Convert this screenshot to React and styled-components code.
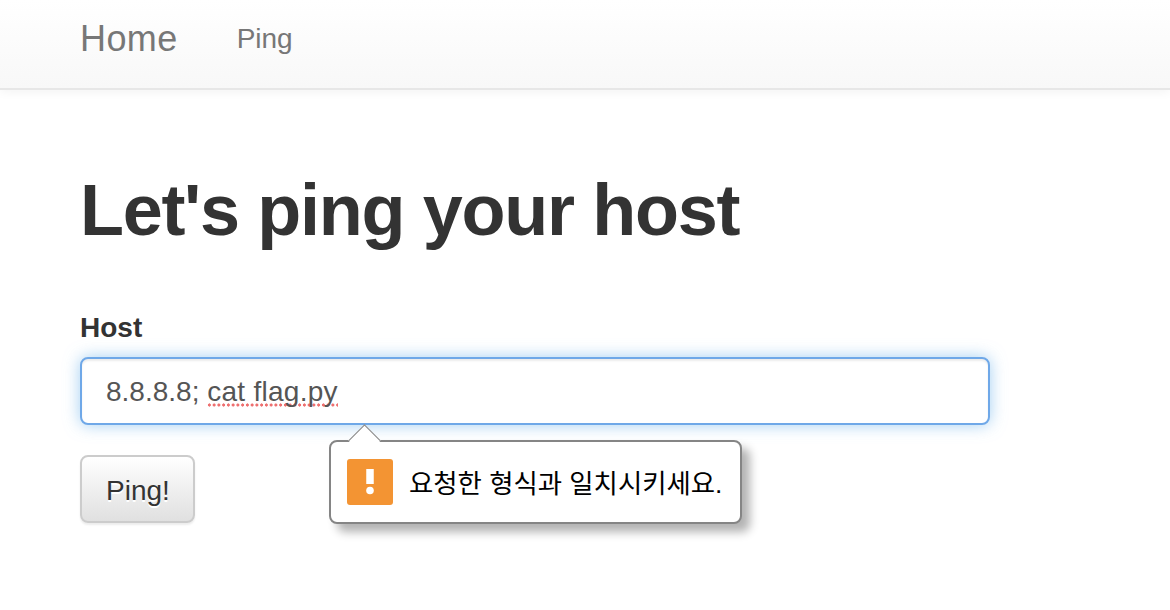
import React from 'react';
import styled, { createGlobalStyle } from 'styled-components';

const GlobalStyle = createGlobalStyle`
  html, body {
    margin: 0;
    height: 100%;
    background: #fff;
    overflow: hidden;
  }
  body {
    font-family: "Liberation Sans", Arial, sans-serif;
    color: #333;
  }
`;

const App = () => (
  <>
    <GlobalStyle />
    <Navbar>
      <Brand>Home</Brand>
      <NavLink>Ping</NavLink>
    </Navbar>
    <Container>
      <Title>Let's ping your host</Title>
      <Label>Host</Label>
      <FieldWrap>
        <HostInput>
          8.8.8.8; <Misspelled>cat flag.py</Misspelled>
        </HostInput>
        <Bubble>
          <BubbleArrow />
          <WarningIcon>
            <svg width="46" height="46" viewBox="0 0 46 46">
              <rect x="19.25" y="10" width="7.5" height="15" fill="#fff" />
              <circle cx="23" cy="31.5" r="3.8" fill="#fff" />
            </svg>
          </WarningIcon>
          <BubbleText>요청한 형식과 일치시키세요.</BubbleText>
        </Bubble>
      </FieldWrap>
      <PingButton>Ping!</PingButton>
    </Container>
  </>
);

const Navbar = styled.nav`
  display: flex;
  align-items: center;
  height: 78px;
  padding: 0 80px 10px;
  background: linear-gradient(to bottom, #fff 0%, #f8f8f8 100%);
  border-bottom: 2px solid #e7e7e7;
  box-shadow: 0 2px 10px rgba(0, 0, 0, 0.05);
`;

const Brand = styled.a`
  font-size: 36px;
  letter-spacing: 0.4px;
  color: #777;
  margin-right: 59px;
`;

const NavLink = styled.a`
  font-size: 28px;
  color: #777;
`;

const Container = styled.main`
  padding: 0 80px;
  width: 910px;
`;

const Title = styled.h1`
  margin: 80px 0 0;
  font-size: 72px;
  line-height: 80px;
  font-weight: 700;
  letter-spacing: -1.3px;
  color: #333;
`;

const Label = styled.label`
  display: block;
  margin: 58px 0 9px;
  font-size: 28px;
  line-height: 40px;
  font-weight: 700;
`;

const FieldWrap = styled.div`
  position: relative;
`;

const HostInput = styled.div`
  box-sizing: border-box;
  height: 68px;
  padding: 2px 24px 0;
  display: flex;
  align-items: center;
  white-space: pre;
  font-size: 28px;
  color: #555;
  background: #fff;
  border: 2px solid #6fa8e8;
  border-radius: 8px;
  box-shadow: inset 0 2px 2px rgba(0, 0, 0, 0.075), 0 0 16px rgba(102, 175, 233, 0.6);
`;

const Misspelled = styled.span`
  display: inline-block;
  letter-spacing: 0.28px;
  background-image: radial-gradient(circle, #ee7070 1.4px, transparent 1.8px);
  background-size: 4.76px 4px;
  background-repeat: repeat-x;
  background-position: 0 calc(100% - 1px);
`;

const Bubble = styled.div`
  position: absolute;
  left: 249px;
  top: 83px;
  box-sizing: border-box;
  width: 413px;
  height: 84px;
  display: flex;
  align-items: center;
  gap: 16px;
  padding: 0 16px;
  background: #fff;
  border: 2px solid #858585;
  border-radius: 8px;
  box-shadow: 8px 8px 10px rgba(0, 0, 0, 0.3);
`;

const BubbleArrow = styled.span`
  position: absolute;
  left: 22px;
  top: -13px;
  width: 22px;
  height: 22px;
  background: #fff;
  border-top: 1.5px solid #858585;
  border-left: 1.5px solid #858585;
  transform: rotate(45deg);
`;

const WarningIcon = styled.span`
  position: relative;
  flex: none;
  display: block;
  width: 46px;
  height: 46px;
  background: #f39433;
  border-radius: 3px;
  svg {
    display: block;
  }
`;

const BubbleText = styled.span`
  position: relative;
  top: -1px;
  font-family: "Liberation Sans", "Noto Sans CJK KR", sans-serif;
  font-size: 26.4px;
  color: #000;
  white-space: nowrap;
`;

const PingButton = styled.button`
  display: block;
  box-sizing: border-box;
  margin-top: 30px;
  width: 115px;
  height: 68px;
  padding: 3px 0 0 1px;
  font-family: inherit;
  font-size: 28px;
  color: #333;
  text-shadow: 0 2px 0 #fff;
  background: linear-gradient(to bottom, #fff 0%, #e0e0e0 100%);
  border: 2px solid #ccc;
  border-radius: 8px;
  box-shadow: inset 0 2px 0 rgba(255, 255, 255, 0.15), 0 2px 2px rgba(0, 0, 0, 0.075);
`;

export default App;
